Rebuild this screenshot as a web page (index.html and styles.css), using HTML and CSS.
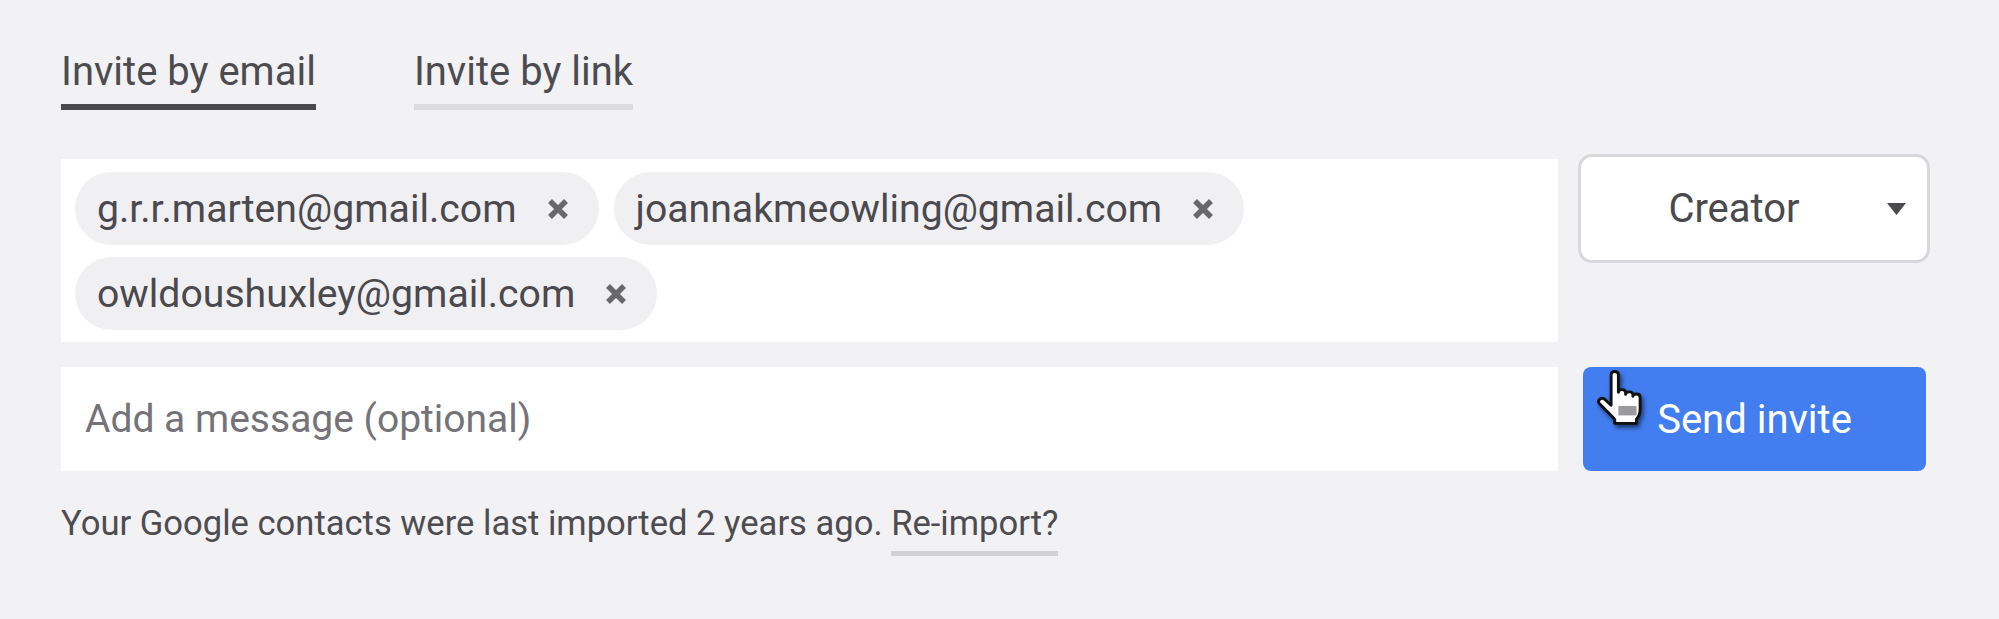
FILE: index.html
```html
<!DOCTYPE html>
<html lang="en">
<head>
<meta charset="utf-8">
<title>Invite</title>
<link rel="stylesheet" href="styles.css">
</head>
<body>
<div class="page">
  <nav class="tabs">
    <span class="tab tab-active">Invite by email</span>
    <span class="tab">Invite by link</span>
  </nav>

  <div class="row row-top">
    <div class="emails">
      <span class="chip"><span class="chip-text">g.r.r.marten@gmail.com</span><svg class="chip-x" viewBox="0 0 24 24"><path d="M4 4L20 20M20 4L4 20"/></svg></span>
      <span class="chip"><span class="chip-text">joannakmeowling@gmail.com</span><svg class="chip-x" viewBox="0 0 24 24"><path d="M4 4L20 20M20 4L4 20"/></svg></span>
      <span class="chip"><span class="chip-text">owldoushuxley@gmail.com</span><svg class="chip-x" viewBox="0 0 24 24"><path d="M4 4L20 20M20 4L4 20"/></svg></span>
    </div>
    <div class="select">
      <span class="select-label">Creator</span>
      <svg class="caret" viewBox="0 0 19 12"><path d="M0 0H19L9.5 12Z"/></svg>
    </div>
  </div>

  <div class="row row-bottom">
    <div class="message">Add a message (optional)</div>
    <button class="send">Send invite
      <svg class="cursor" viewBox="0 0 16 16">
        <path d="M5 1.6Q5 0.7 6 0.7Q7 0.7 7 1.6V6.4Q7.1 5.7 8 5.7Q8.9 5.7 9 6.5V7Q9.1 6.3 10 6.3Q10.9 6.3 11 7V7.5Q11.1 6.9 12 6.9Q13 6.9 13 7.9V11Q13 12.8 12 13.8V15H6V13.9Q5.2 13 4.2 12L1.8 9.6Q1.2 8.9 1.9 8.3Q2.6 7.8 3.3 8.4L5 10Z"/>
        <path class="cursor-fill" d="M7 10.2V12.8H12V10.2Z"/>
      </svg>
    </button>
  </div>

  <p class="note">Your Google contacts were last imported 2 years ago. <span class="reimport">Re-import?</span></p>
</div>
</body>
</html>
```

FILE: styles.css
```css
html, body {
  margin: 0;
  padding: 0;
  background: #f2f1f4;
}

.page {
  font-family: Roboto, "Liberation Sans", Arial, sans-serif;
  color: #4d4c51;
  padding: 48px 0 0 61px;
  width: 1869px;
}

.tabs {
  display: flex;
  gap: 98px;
  font-size: 40px;
  line-height: 47px;
}

.tab {
  display: inline-block;
  padding-bottom: 9px;
  border-bottom: 6px solid #dcdbe0;
  color: #4c4b50;
}

.tab-active {
  border-bottom-color: #4a494e;
}

.row {
  display: flex;
  gap: 20px;
  align-items: flex-start;
}

.row-top {
  margin-top: 44px;
}

.row-bottom {
  margin-top: 25px;
}

.emails {
  width: 1497px;
  box-sizing: border-box;
  margin-top: 5px;
  background: #ffffff;
  padding: 13px 14px 12px;
  display: flex;
  flex-wrap: wrap;
  gap: 12px 15px;
}

.chip {
  display: inline-flex;
  align-items: center;
  height: 73px;
  padding: 0 29px 0 22px;
  border-radius: 37px;
  background: #f0eff2;
  font-size: 39.2px;
  color: #4a494e;
  gap: 29px;
}

.chip-x {
  width: 24px;
  height: 24px;
  flex: none;
}

.chip-x path {
  stroke: #68676c;
  stroke-width: 5.5;
  fill: none;
}

.select {
  width: 352px;
  height: 109px;
  box-sizing: border-box;
  border: 3px solid #d8d7dc;
  border-radius: 14px;
  background: #ffffff;
  display: flex;
  align-items: center;
  padding-right: 21px;
}

.select-label {
  flex: 1;
  text-align: center;
  font-size: 40px;
  color: #4a494e;
}

.caret {
  width: 19px;
  height: 12px;
  flex: none;
}

.caret path {
  fill: #4a494e;
}

.message {
  width: 1497px;
  height: 104px;
  box-sizing: border-box;
  background: #ffffff;
  padding-left: 24px;
  display: flex;
  align-items: center;
  font-size: 39px;
  color: #747379;
}

.send {
  position: relative;
  width: 343px;
  height: 104px;
  margin-left: 5px;
  border: none;
  border-radius: 8px;
  background: #437ef1;
  color: #ffffff;
  font-family: Roboto, "Liberation Sans", Arial, sans-serif;
  font-size: 40px;
  padding: 0;
}

.cursor {
  position: absolute;
  left: 10px;
  top: 2px;
  width: 58px;
  height: 58px;
  filter: drop-shadow(2px 3px 2px rgba(0, 0, 0, 0.55));
}

.cursor path {
  fill: #ffffff;
  stroke: #111111;
  stroke-width: 0.8;
  stroke-linejoin: round;
}

.cursor .cursor-fill {
  fill: #9a9a9e;
  stroke: none;
}

.note {
  margin: 32px 0 0;
  font-size: 34.6px;
  line-height: 41px;
  color: #4d4c51;
}

.reimport {
  display: inline-block;
  line-height: 41px;
  padding-bottom: 7px;
  border-bottom: 5px solid #d2d1d6;
}
```
